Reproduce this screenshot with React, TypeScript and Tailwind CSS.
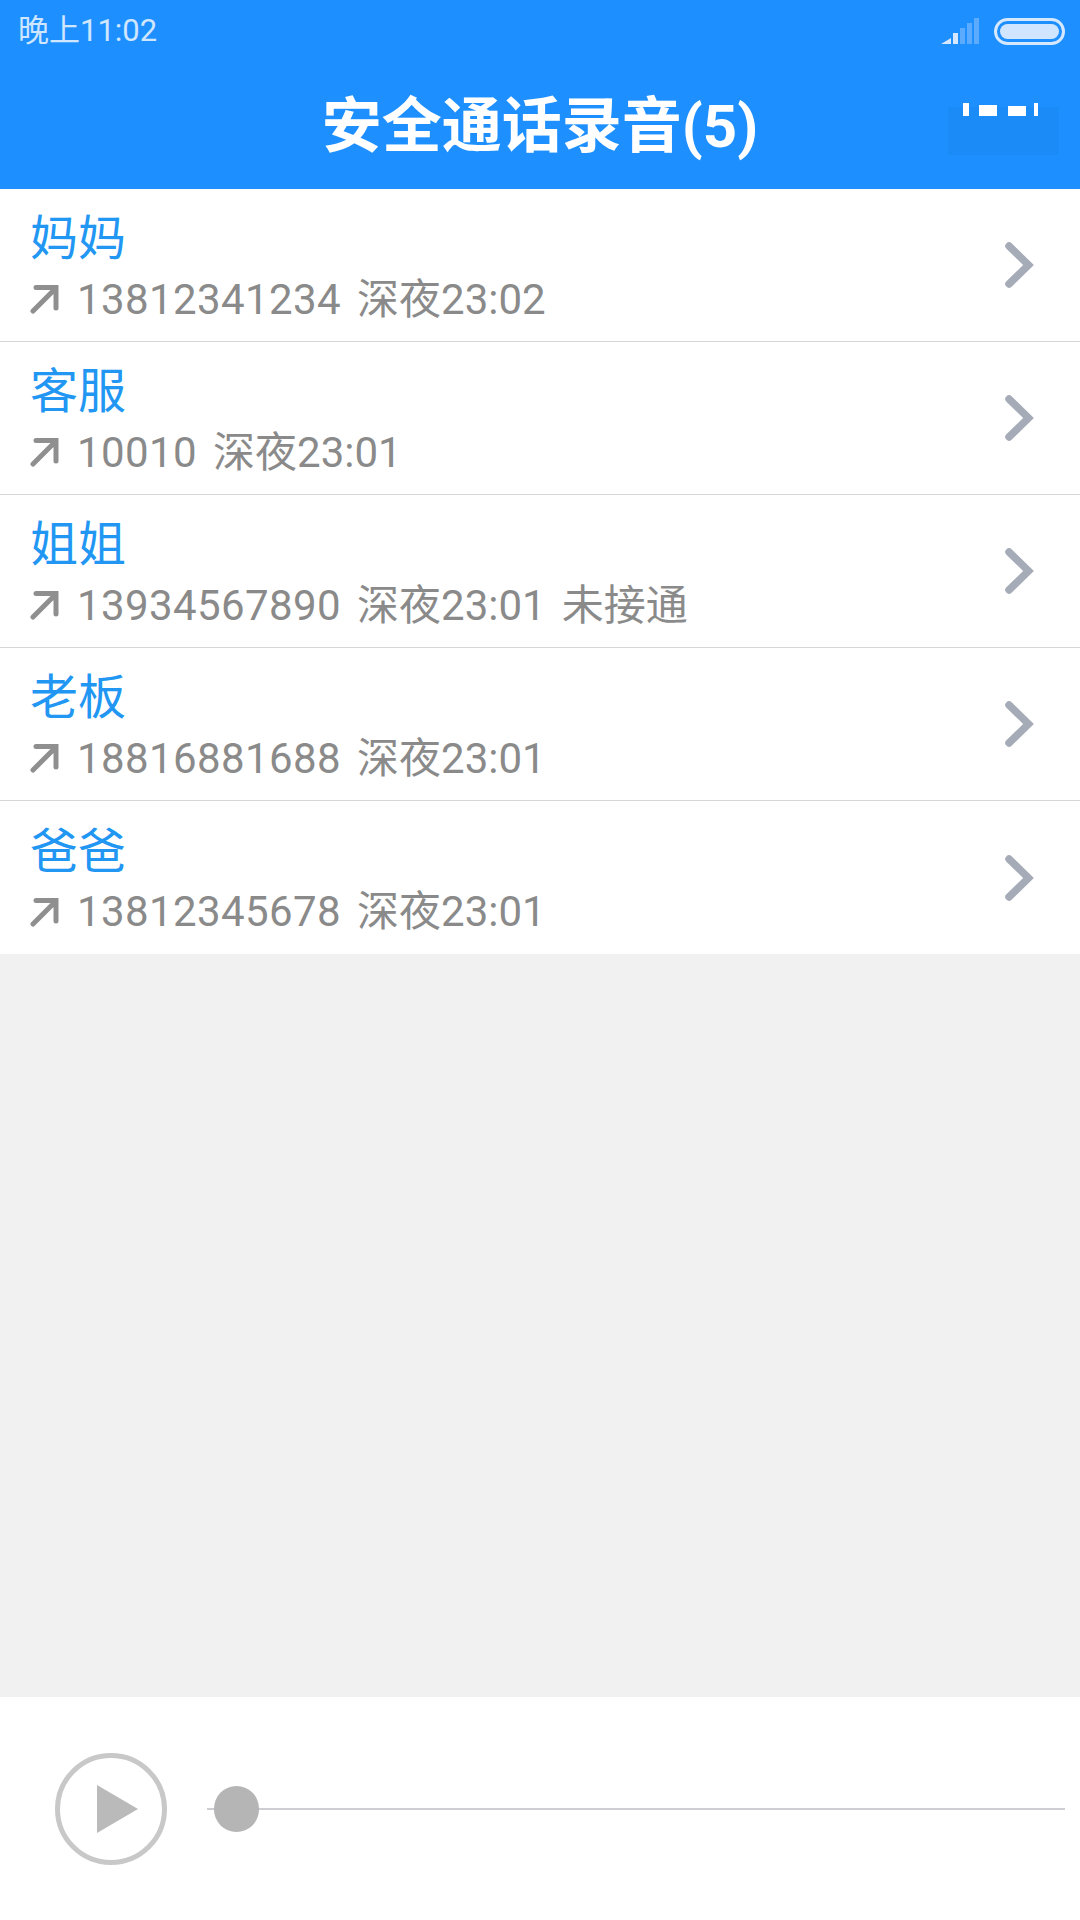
const FONT = "font-['Roboto','Noto_Sans_CJK_SC',sans-serif]";

type Row = { name: string; phone: string; time: string; extra?: string };
const rows: Row[] = [
  { name: "妈妈", phone: "13812341234", time: "深夜23:02" },
  { name: "客服", phone: "10010", time: "深夜23:01" },
  { name: "姐姐", phone: "13934567890", time: "深夜23:01", extra: "未接通" },
  { name: "老板", phone: "18816881688", time: "深夜23:01" },
  { name: "爸爸", phone: "13812345678", time: "深夜23:01" },
];

function Signal() {
  return (
    <svg width="38" height="26" viewBox="0 0 38 26">
      <path d="M0 26 L10 26 L10 20 Z" fill="#d5e8ff" />
      <rect x="12" y="15" width="5" height="11" fill="#d5e8ff" />
      <rect x="19" y="10" width="5" height="16" fill="#5dabff" />
      <rect x="26" y="5" width="5" height="21" fill="#5dabff" />
      <rect x="33" y="0" width="5" height="26" fill="#5dabff" />
    </svg>
  );
}

function Arrow() {
  return (
    <svg width="29" height="30" viewBox="0 0 29 30" className="mr-[18px] shrink-0">
      <path d="M3 27 L25 5 M6 3.500 H26 V24" fill="none" stroke="#8f8f8f" strokeWidth="5" strokeLinecap="round" />
    </svg>
  );
}

function Chevron() {
  return (
    <svg width="32" height="48" viewBox="0 0 32 48">
      <path d="M5 5 L24.500 24 L5 43" fill="none" stroke="#a6abb8" strokeWidth="7.500" strokeLinecap="round" />
    </svg>
  );
}

function ListRow({ name, phone, time, extra, last }: Row & { last: boolean }) {
  return (
    <div className={`flex h-[153px] items-center justify-between bg-white pl-[30px] pr-[44px] ${last ? "" : "border-b border-[#d6d6d6]"}`}>
      <div className="flex flex-col pt-[8px]">
        <div className="text-[48px] leading-[60px] text-[#2196f3]">{name}</div>
        <div className="flex h-[60px] items-center text-[42px] text-[#8a8a8a]">
          <Arrow />
          <div className="flex gap-[16px]">
            <span className="tracking-[0.4px]">{phone}</span>
            <span>{time}</span>
            {extra ? <span>{extra}</span> : null}
          </div>
        </div>
      </div>
      <Chevron />
    </div>
  );
}

export default function App() {
  return (
    <div className={`flex h-[1920px] w-[1080px] flex-col overflow-hidden bg-[#f1f1f1] ${FONT}`}>
      <header className="h-[189px] shrink-0 bg-[#1e8fff]">
        <div className="flex h-[62px] items-center justify-between pl-[18px] pr-[15px]">
          <span className="text-[31px] text-[#cfe6ff]">晚上11:02</span>
          <div className="flex items-center gap-[15px]">
            <Signal />
            <div className="rounded-full border-[3px] border-[#d5e8ff] p-[3px]">
              <div className="h-[15px] w-[59px] rounded-full bg-[#d0e5ff]" />
            </div>
          </div>
        </div>
        <div className="relative flex h-[127px] items-center justify-center pt-[2px]">
          <h1 className="text-[60px] font-bold leading-none text-white">安全通话录音(5)</h1>
          <div className="absolute left-[948px] top-[45px] h-[48px] w-[111px] bg-[#1b8bf8]" />
          <div className="absolute left-[963px] top-[41px] h-[13px] w-[6px] bg-white blur-[0.5px]" />
          <div className="absolute left-[979px] top-[43px] h-[11px] w-[18px] bg-white blur-[0.5px]" />
          <div className="absolute left-[1008px] top-[44px] h-[10px] w-[18px] bg-white blur-[0.5px]" />
          <div className="absolute left-[1034px] top-[41px] h-[13px] w-[4px] bg-white blur-[0.5px]" />
        </div>
      </header>
      <main className="shrink-0 bg-white">
        {rows.map((r, i) => (
          <ListRow key={r.name} {...r} last={i === rows.length - 1} />
        ))}
      </main>
      <div className="flex-1" />
      <footer className="flex h-[223px] shrink-0 items-center bg-white pl-[55px] pr-[15px]">
        <div className="flex h-[112px] w-[112px] shrink-0 items-center justify-center rounded-full border-[5px] border-[#c8c8c8] pl-[12px]">
          <svg width="41" height="48" viewBox="0 0 41 48">
            <path d="M0 0 L41 24 L0 48 Z" fill="#bababa" />
          </svg>
        </div>
        <div className="relative ml-[40px] h-[2px] flex-1 bg-[#cdcdd2]">
          <div className="absolute left-[7px] top-[-22px] h-[46px] w-[45px] rounded-full bg-[#b5b5b5]" />
        </div>
      </footer>
    </div>
  );
}
